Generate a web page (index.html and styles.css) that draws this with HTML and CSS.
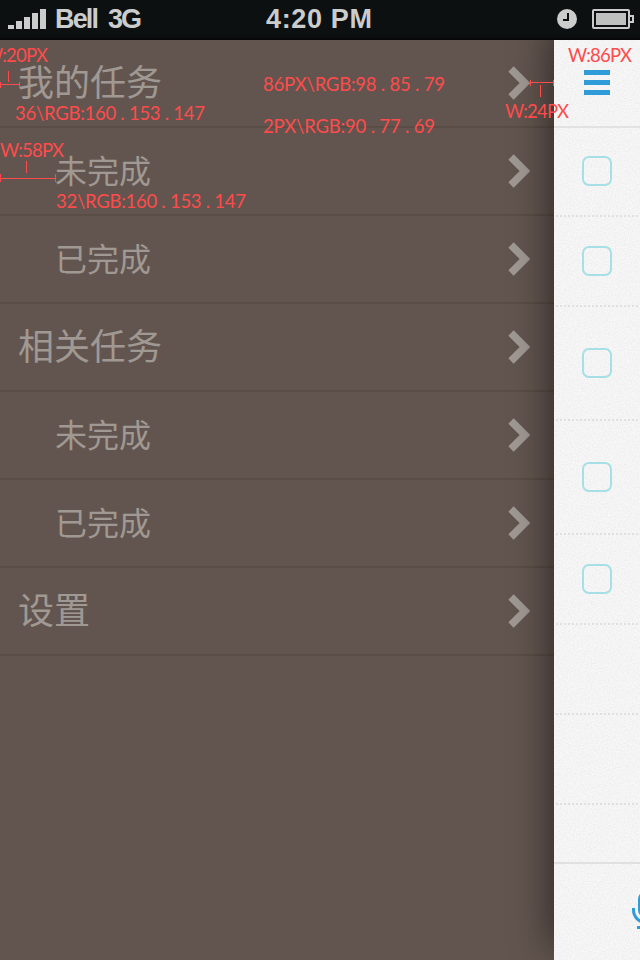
FILE: index.html
```html
<!DOCTYPE html>
<html lang="zh-CN">
<head>
<meta charset="utf-8">
<title>我的任务</title>
<link rel="stylesheet" href="styles.css">
</head>
<body>
<div class="phone">
  <header class="status">
    <div class="status-left">
      <svg class="signal" width="38" height="20" viewBox="0 0 38 20"><path d="M0 16h6v4H0zM8 12h6v8H8zM16 8h6v12h-6zM24 4h6v16h-6zM32 0h6v20h-6z" fill="#cbcccc"/></svg>
      <svg class="carrier" width="90" height="30"><text x="0" y="19" textLength="44">Bell</text><text x="53" y="19" textLength="34">3G</text></svg>
    </div>
    <svg class="clock-text" width="110" height="30"><text x="0" y="19" textLength="106">4:20 PM</text></svg>
    <div class="status-right">
      <svg width="20" height="20" viewBox="0 0 20 20"><circle cx="10" cy="10" r="10" fill="#cbcccc"/><path d="M11 4v7H6" fill="none" stroke="#0b0d0f" stroke-width="2"/></svg>
      <svg width="42" height="20" viewBox="0 0 42 20"><rect x="1" y="1" width="36" height="18" rx="1" fill="none" stroke="#cbcccc" stroke-width="2"/><path d="M4 4h30v12H4z" fill="#bfc1c1"/><path d="M38 7h3v6h-3" fill="none" stroke="#cbcccc" stroke-width="2"/></svg>
    </div>
  </header>
  <main class="content">
    <nav class="menu">
      <div class="item"><span>我的任务</span><svg class="arrow" viewBox="0 0 22 34"><path d="M3 3l14 14L3 31"/></svg></div>
      <div class="item sub"><span>未完成</span><svg class="arrow" viewBox="0 0 22 34"><path d="M3 3l14 14L3 31"/></svg></div>
      <div class="item sub"><span>已完成</span><svg class="arrow" viewBox="0 0 22 34"><path d="M3 3l14 14L3 31"/></svg></div>
      <div class="item"><span>相关任务</span><svg class="arrow" viewBox="0 0 22 34"><path d="M3 3l14 14L3 31"/></svg></div>
      <div class="item sub"><span>未完成</span><svg class="arrow" viewBox="0 0 22 34"><path d="M3 3l14 14L3 31"/></svg></div>
      <div class="item sub"><span>已完成</span><svg class="arrow" viewBox="0 0 22 34"><path d="M3 3l14 14L3 31"/></svg></div>
      <div class="item"><span>设置</span><svg class="arrow" viewBox="0 0 22 34"><path d="M3 3l14 14L3 31"/></svg></div>
    </nav>
    <section class="panel">
      <svg class="grain" width="86" height="920"><filter id="grain" x="0" y="0" width="100%" height="100%"><feTurbulence type="fractalNoise" baseFrequency="0.7" numOctaves="2"/><feColorMatrix values="0 0 0 0 0  0 0 0 0 0  0 0 0 0 0  0.09 0 0 0 -0.028"/></filter><rect width="86" height="920" filter="url(#grain)"/></svg>
      <div class="bar"><svg width="26" height="26" viewBox="0 0 26 26"><path d="M0 0h26v5H0zM0 10h26v5H0zM0 20h26v5H0z" fill="#2f9cd9"/></svg></div>
      <div class="task first"><i class="check"></i></div>
      <div class="task"><i class="check"></i></div>
      <div class="task tall"><i class="check"></i></div>
      <div class="task tall"><i class="check"></i></div>
      <div class="task"><i class="check"></i></div>
      <div class="task"></div>
      <div class="task"></div>
      <div class="rest"></div>
      <footer class="tools"><svg width="32" height="40" viewBox="0 0 32 40"><rect x="6" y="0" width="16" height="25" rx="7" fill="#2f9cd9"/><path d="M1.500 16v2a12.500 12.500 0 0 0 25 0v-2" fill="none" stroke="#2f9cd9" stroke-width="3"/><path d="M5 34h18v3H5z" fill="#2f9cd9"/></svg></footer>
    </section>
  </main>
  <svg class="notes" width="640" height="960" viewBox="0 0 640 960">
    <g class="label">
      <text x="-16" y="62" textLength="64">W:20PX</text>
      <text x="15" y="119.500" textLength="190">36\RGB:160 . 153 . 147</text>
      <text x="263" y="90.500" textLength="182">86PX\RGB:98 . 85 . 79</text>
      <text x="263" y="132.500" textLength="172">2PX\RGB:90 . 77 . 69</text>
      <text x="505" y="117.500" textLength="64">W:24PX</text>
      <text x="568" y="61.500" textLength="64">W:86PX</text>
      <text x="0" y="156.500" textLength="64">W:58PX</text>
      <text x="56" y="207.500" textLength="190">32\RGB:160 . 153 . 147</text>
    </g>
    <path class="rule" d="M0 84.500h20M.5 82v6M19.500 82v6M8.500 71v11M0 178.500h56M.5 174v8M55.500 174v8M26.500 161v12M530 82.500h24M530.500 80v6M553.500 80v6M540.500 85v12"/>
  </svg>
</div>
</body>
</html>
```
FILE: styles.css
```css
* { box-sizing: border-box; }
body { margin: 0; }
svg { display: block; flex: none; }
.phone { position: relative; width: 640px; height: 960px; overflow: hidden; background: #62554f; font-family: "Noto Sans CJK SC", sans-serif; }
.status { height: 40px; padding: 0 6px 0 8px; display: grid; grid-template-columns: 258px 110px 1fr; align-items: start; background: linear-gradient(#0d1011 0, #0d1011 36px, #050606 40px); }
.status svg { overflow: visible; }
.status-left, .status-right { display: flex; }
.status-left { padding-top: 9px; gap: 9px; }
.status text { font: bold 27px "Liberation Sans", sans-serif; fill: #cbcccc; }
.clock-text { margin-top: 9px; }
.status-right { padding-top: 9px; gap: 15px; justify-content: flex-end; }
.content { display: flex; height: 920px; overflow: hidden; }
.menu { width: 554px; }
.item { height: 88px; padding: 0 24px 2px 18px; display: flex; align-items: center; justify-content: space-between; border-bottom: 2px solid #5a4d45; color: #a09993; font-size: 36px; line-height: 52px; }
.item span { margin-top: -4px; }
.sub { padding-left: 55px; font-size: 32px; }
.sub span { margin-top: -3px; }
.arrow { width: 22px; height: 34px; margin-top: 2px; }
.arrow path { fill: none; stroke: #a09993; stroke-width: 7.500; }
.panel { position: relative; width: 86px; display: flex; flex-direction: column; background: #f8f8f8; box-shadow: 0 -12px 40px rgba(20,15,15,.75); }
.grain { position: absolute; inset: 0; }
.bar, .task, .tools { position: relative; }
.bar { height: 88px; padding: 30px 0 0 30px; border-bottom: 2px solid #e2e2e2; flex: none; }
.task { height: 90px; padding: 29px 0 0 26px; margin-left: 2px; flex: none; background: repeating-linear-gradient(90deg, #e0e0e0 0 2px, transparent 2px 4px) bottom / 100% 2px no-repeat; }
.first { height: 89px; padding-top: 28px; }
.tall { height: 114px; padding-top: 41px; }
.check { display: block; width: 30px; height: 30px; border: 2px solid #a6dfe6; border-radius: 7px; }
.rest { flex: 1; }
.tools { height: 98px; padding: 28px 0 0 78px; border-top: 2px solid #e0e0e0; flex: none; }
.notes { position: absolute; inset: 0; }
.label { fill: #ff4b4b; font: 18.500px Lato, sans-serif; }
.label text { white-space: pre; }
.rule { stroke: #ff4b4b; fill: none; shape-rendering: crispEdges; }
```
